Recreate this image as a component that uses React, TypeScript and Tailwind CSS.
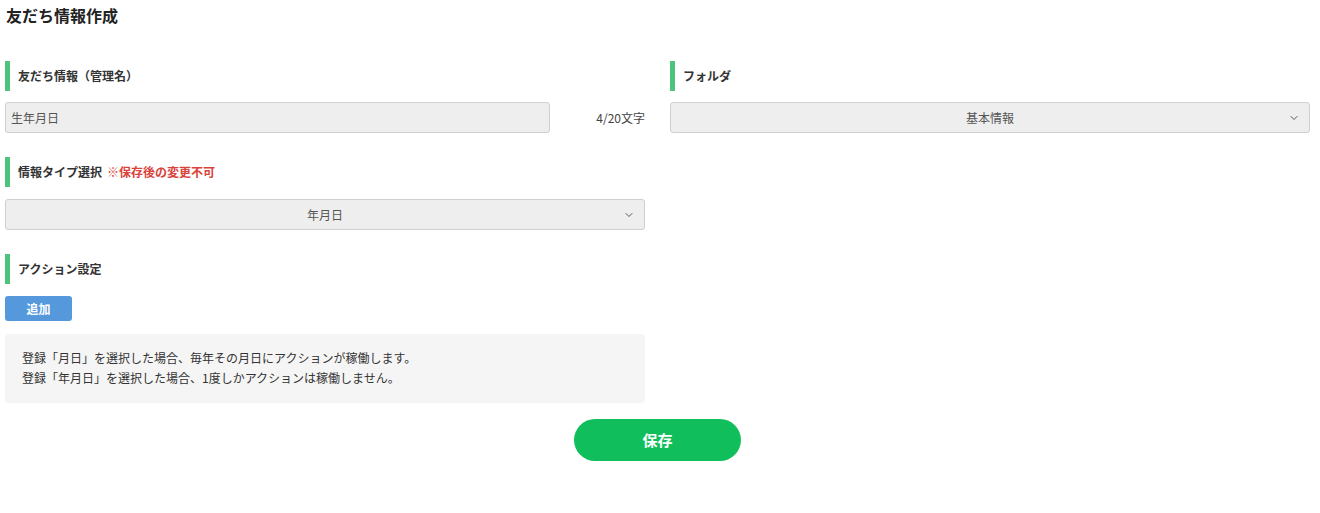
import { ChevronDown } from "lucide-react";

const font = { fontFamily: '"Noto Sans CJK JP", "Noto Sans", sans-serif' };

function SectionLabel({ children }: { children: React.ReactNode }) {
  return (
    <div className="flex h-[30px] items-center border-l-[5px] border-[#4cc47c] pl-[8px] text-[12px] font-bold text-[#333]">
      {children}
    </div>
  );
}

function SelectBox({ value }: { value: string }) {
  return (
    <div className="relative flex h-[31px] w-full items-center justify-center rounded-[3px] border border-[#cfcfcf] bg-[#eeeeee] text-[12px] text-[#555]">
      {value}
      <ChevronDown className="absolute right-[9px] top-1/2 h-[12px] w-[12px] -translate-y-1/2 text-[#555]" strokeWidth={2} />
    </div>
  );
}

export default function App() {
  return (
    <div className="min-h-[513px] bg-white px-[5px]" style={font}>
      <h1 className="pl-[1px] text-[16px] font-bold leading-[30px] text-[#222]">友だち情報作成</h1>

      <div className="mt-[31px] flex gap-[25px]">
        <div className="w-[640px]">
          <SectionLabel>友だち情報（管理名）</SectionLabel>
          <div className="mt-[11px] flex items-center">
            <div className="flex h-[31px] w-[545px] items-center rounded-[3px] border border-[#cfcfcf] bg-[#eeeeee] px-[5px] text-[12px] text-[#555]">
              生年月日
            </div>
            <div className="flex-1 text-right text-[12px] text-[#444]">4/20文字</div>
          </div>
        </div>
        <div className="w-[640px]">
          <SectionLabel>フォルダ</SectionLabel>
          <div className="mt-[11px]">
            <SelectBox value="基本情報" />
          </div>
        </div>
      </div>

      <div className="w-[640px]">
        <div className="mt-[24px]">
          <SectionLabel>
            情報タイプ選択<span className="ml-[5px] text-[#d9433b]">※保存後の変更不可</span>
          </SectionLabel>
        </div>
        <div className="mt-[12px]">
          <SelectBox value="年月日" />
        </div>

        <div className="mt-[24px]">
          <SectionLabel>アクション設定</SectionLabel>
        </div>
        <button className="mt-[12px] flex h-[25px] w-[67px] items-center justify-center rounded-[3px] bg-[#5598dc] text-[12px] font-bold text-white">
          追加
        </button>

        <div className="mt-[13px] rounded-[4px] bg-[#f5f5f5] px-[17px] pb-[15px] pt-[14px] text-[12px] leading-[20px] text-[#333]">
          <p>登録「月日」を選択した場合、毎年その月日にアクションが稼働します。</p>
          <p>登録「年月日」を選択した場合、1度しかアクションは稼働しません。</p>
        </div>
      </div>

      <div className="mt-[16px] flex w-[1305px] justify-center">
        <button className="h-[42px] w-[167px] rounded-full bg-[#10bf5b] text-[15px] font-bold text-white">保存</button>
      </div>
    </div>
  );
}
